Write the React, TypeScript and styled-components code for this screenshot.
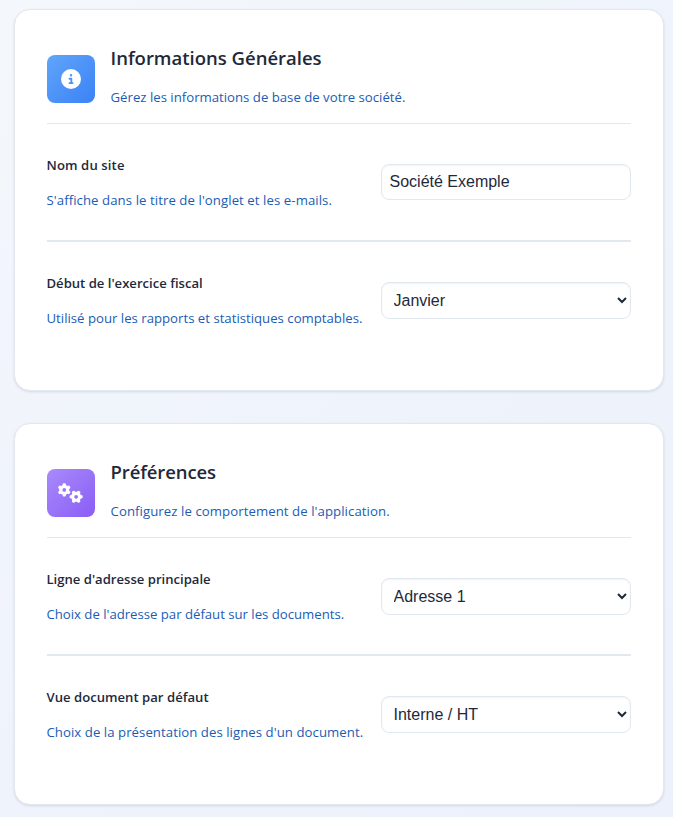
import React from "react";
import styled, { createGlobalStyle } from "styled-components";
import { FaCircleInfo, FaGears } from "react-icons/fa6";

const GlobalStyle = createGlobalStyle`
  *, *::before, *::after { box-sizing: border-box; }
  body {
    margin: 0;
    color: #1e293b;
    font-family: "Open Sans", "Noto Sans", sans-serif;
  }
  h2, p { margin: 0; }
`;

const Page = styled.main`
  display: flex;
  flex-direction: column;
  gap: 32px;
  height: 817px;
  padding: 9px 9.5px 12px 13.5px;
  overflow: hidden;
  background: linear-gradient(135deg, #f4f7fb 0%, #eff3fb 50%, #ecf1fb 100%);
`;

const Card = styled.section`
  flex: none;
  height: 382px;
  padding: 32px;
  border: 1px solid #e2e8f0;
  border-radius: 16px;
  background: #fff;
  box-shadow: 0 1px 3px rgba(30, 41, 59, 0.09), 0 1px 2px rgba(30, 41, 59, 0.04);
`;

const CardHeader = styled.header`
  display: flex;
  align-items: center;
  gap: 16px;
  height: 82px;
  padding-bottom: 8px;
  border-bottom: 1px solid #e2e8f0;
`;

const IconTile = styled.div<{ $from: string; $to: string; $glyphWidth: number }>`
  display: grid;
  place-items: center;
  width: 48px;
  height: 48px;
  border-radius: 8px;
  color: #fff;
  background: linear-gradient(135deg, ${(p) => p.$from}, ${(p) => p.$to});

  svg { width: ${(p) => p.$glyphWidth}px; height: 20px; }
`;

const HeaderText = styled.div`
  display: flex;
  flex-direction: column;
  gap: 15px;
  padding-bottom: 6px;
`;

const Title = styled.h2<{ $tracking: number }>`
  font-size: 18.5px;
  font-weight: 600;
  line-height: 28px;
  letter-spacing: ${(p) => p.$tracking}px;
  white-space: nowrap;
`;

const Hint = styled.p<{ $tracking: number }>`
  color: #1a5cb5;
  font-size: 13.2px;
  line-height: 21px;
  letter-spacing: ${(p) => p.$tracking}px;
  white-space: nowrap;
`;

const Row = styled.div`
  display: flex;
  justify-content: space-between;
  height: 116px;
  padding-top: 31px;

  & + & {
    height: 118px;
    border-top: 2px solid #e2e8f0;
  }
`;

const RowText = styled.div`
  display: flex;
  flex-direction: column;
  gap: 14px;
`;

const Label = styled.label<{ $tracking: number }>`
  font-size: 13.1px;
  font-weight: 600;
  line-height: 21px;
  letter-spacing: ${(p) => p.$tracking}px;
  white-space: nowrap;
`;

const Control = styled.input`
  flex: none;
  width: 250px;
  height: 36px;
  margin: 9px 0 0;
  padding: 8px;
  border: 1px solid #e2e8f0;
  border-radius: 8px;
  background: #fff;
  box-shadow: inset 0 1px 2px rgba(0, 0, 0, 0.05);
  color: #1e293b;
  font: 16px/18px "Liberation Sans", Arial, sans-serif;
`;

const SelectControl = styled(Control).attrs({ as: "select" })`
  height: 37px;
`;

type Text = { text: string; tracking: number };
type Setting = { id: string; label: Text; hint: Text; value: string; kind: "text" | "select" };
type Section = {
  title: Text;
  hint: Text;
  icon: React.ReactNode;
  glyphWidth: number;
  from: string;
  to: string;
  settings: Setting[];
};

const sections: Section[] = [
  {
    title: { text: "Informations Générales", tracking: 0 },
    hint: { text: "Gérez les informations de base de votre société.", tracking: 0 },
    icon: <FaCircleInfo />,
    glyphWidth: 20,
    from: "#60a5fa",
    to: "#3b82f6",
    settings: [
      {
        id: "site-name",
        label: { text: "Nom du site", tracking: 0.12 },
        hint: { text: "S'affiche dans le titre de l'onglet et les e-mails.", tracking: 0.07 },
        value: "Société Exemple",
        kind: "text",
      },
      {
        id: "fiscal-start",
        label: { text: "Début de l'exercice fiscal", tracking: 0 },
        hint: { text: "Utilisé pour les rapports et statistiques comptables.", tracking: 0 },
        value: "Janvier",
        kind: "select",
      },
    ],
  },
  {
    title: { text: "Préférences", tracking: -0.1 },
    hint: { text: "Configurez le comportement de l'application.", tracking: 0.07 },
    icon: <FaGears />,
    glyphWidth: 25,
    from: "#a78bfa",
    to: "#8b5cf6",
    settings: [
      {
        id: "address-line",
        label: { text: "Ligne d'adresse principale", tracking: 0 },
        hint: { text: "Choix de l'adresse par défaut sur les documents.", tracking: -0.02 },
        value: "Adresse 1",
        kind: "select",
      },
      {
        id: "document-view",
        label: { text: "Vue document par défaut", tracking: 0.02 },
        hint: { text: "Choix de la présentation des lignes d'un document.", tracking: 0.05 },
        value: "Interne / HT",
        kind: "select",
      },
    ],
  },
];

export default function App() {
  return (
    <>
      <GlobalStyle />
      <Page>
        {sections.map((s) => (
          <Card key={s.title.text}>
            <CardHeader>
              <IconTile $from={s.from} $to={s.to} $glyphWidth={s.glyphWidth}>
                {s.icon}
              </IconTile>
              <HeaderText>
                <Title $tracking={s.title.tracking}>{s.title.text}</Title>
                <Hint $tracking={s.hint.tracking}>{s.hint.text}</Hint>
              </HeaderText>
            </CardHeader>
            {s.settings.map((f) => (
              <Row key={f.id}>
                <RowText>
                  <Label htmlFor={f.id} $tracking={f.label.tracking}>{f.label.text}</Label>
                  <Hint $tracking={f.hint.tracking}>{f.hint.text}</Hint>
                </RowText>
                {f.kind === "text" ? (
                  <Control id={f.id} type="text" defaultValue={f.value} />
                ) : (
                  <SelectControl id={f.id}>
                    <option>{f.value}</option>
                  </SelectControl>
                )}
              </Row>
            ))}
          </Card>
        ))}
      </Page>
    </>
  );
}
